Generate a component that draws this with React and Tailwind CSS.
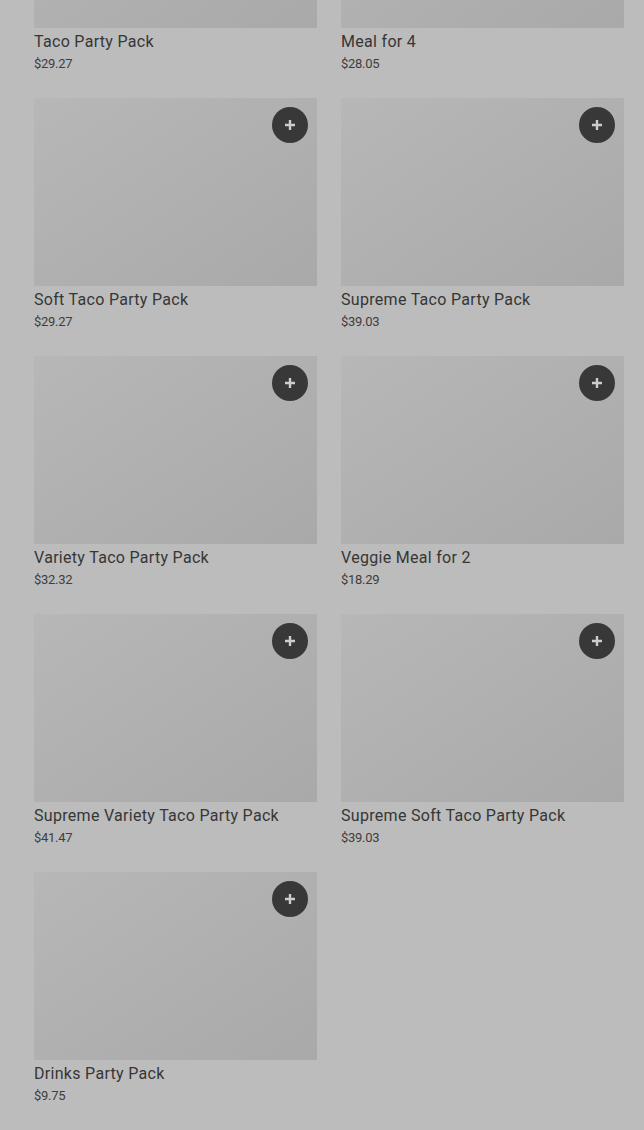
const items = [
  { name: 'Taco Party Pack', price: '$29.27' },
  { name: 'Meal for 4', price: '$28.05' },
  { name: 'Soft Taco Party Pack', price: '$29.27' },
  { name: 'Supreme Taco Party Pack', price: '$39.03' },
  { name: 'Variety Taco Party Pack', price: '$32.32' },
  { name: 'Veggie Meal for 2', price: '$18.29' },
  { name: 'Supreme Variety Taco Party Pack', price: '$41.47' },
  { name: 'Supreme Soft Taco Party Pack', price: '$39.03' },
  { name: 'Drinks Party Pack', price: '$9.75' },
];

function AddButton() {
  return (
    <button className="absolute top-[9px] right-[9px] w-9 h-9 rounded-full bg-[#383838] flex items-center justify-center">
      <svg width="12" height="12" viewBox="0 0 12 12" fill="none">
        <path d="M6 1v10M1 6h10" stroke="#cdcdcd" strokeWidth="2.4" />
      </svg>
    </button>
  );
}

function ItemCard({ item }) {
  return (
    <div>
      <div className="relative h-[188px] bg-gradient-to-br from-[#b7b7b7] to-[#a9a9a9]">
        <AddButton />
      </div>
      <p className="mt-[2px] text-[16px] leading-6 font-normal tracking-[0.3px] text-[#363636]">{item.name}</p>
      <p className="text-[13px] leading-5 text-[#3e3e3e] tracking-[-0.3px]">{item.price}</p>
    </div>
  );
}

export default function App() {
  return (
    <div className="h-[1130px] overflow-hidden bg-[#bcbcbc]" style={{ fontFamily: 'Roboto, "Liberation Sans", sans-serif' }}>
      <div className="mt-[-160px] pl-[34px] pr-[20px] grid grid-cols-2 gap-x-6 gap-y-6">
        {items.map((it, i) => (
          <ItemCard key={i} item={it} />
        ))}
      </div>
    </div>
  );
}
